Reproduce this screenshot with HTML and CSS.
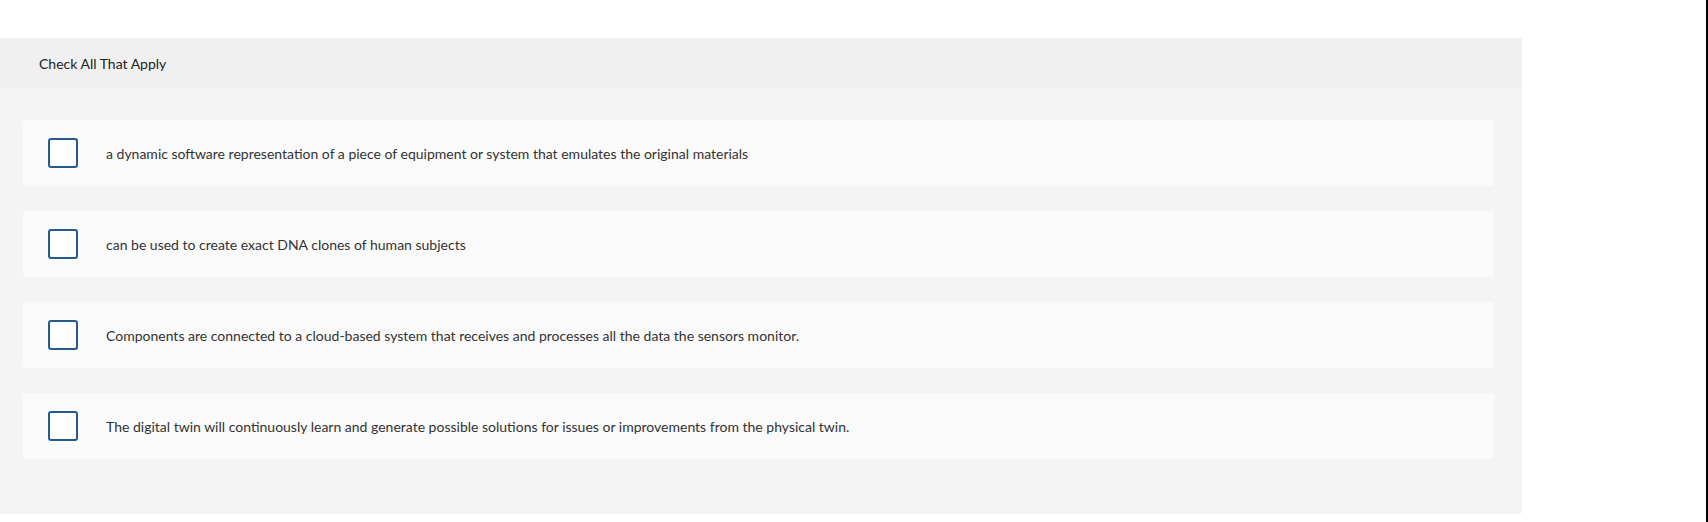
FILE: index.html
```html
<!DOCTYPE html>
<html lang="en">
<head>
<meta charset="utf-8">
<title>Check All That Apply</title>
<link rel="stylesheet" href="styles.css">
</head>
<body>
<div class="panel">
  <div class="panel-header">Check All That Apply</div>
  <div class="panel-body">
    <label class="option">
      <span class="box"></span>
      <span class="text">a dynamic software representation of a piece of equipment or system that emulates the original materials</span>
    </label>
    <label class="option">
      <span class="box"></span>
      <span class="text">can be used to create exact DNA clones of human subjects</span>
    </label>
    <label class="option">
      <span class="box"></span>
      <span class="text">Components are connected to a cloud-based system that receives and processes all the data the sensors monitor.</span>
    </label>
    <label class="option">
      <span class="box"></span>
      <span class="text">The digital twin will continuously learn and generate possible solutions for issues or improvements from the physical twin.</span>
    </label>
  </div>
</div>
</body>
</html>
```

FILE: styles.css
```css
html {
  background: #ffffff;
  border-right: 2px solid #000000;
  height: 100%;
  box-sizing: border-box;
}
body {
  margin: 0;
  padding-top: 38px;
  font-family: "Lato", "Open Sans", "Liberation Sans", sans-serif;
  color: #2b2b2b;
}
.panel {
  width: 1522px;
  background: #f4f4f4;
  border-radius: 0 0 3px 0;
}
.panel-header {
  height: 50px;
  box-sizing: border-box;
  background: #f0f0f0;
  padding-left: 39px;
  display: flex;
  align-items: center;
  font-size: 14px;
  color: #222222;
}
.panel-body {
  padding: 32px 28px 55px 23px;
  display: flex;
  flex-direction: column;
  gap: 25px;
}
.option {
  height: 66px;
  box-sizing: border-box;
  background: #fafafa;
  border-radius: 3px;
  display: flex;
  align-items: center;
  padding-left: 25px;
}
.box {
  width: 30px;
  height: 30px;
  box-sizing: border-box;
  border: 2px solid #245b8f;
  border-radius: 3px;
  background: #ffffff;
  flex: none;
}
.text {
  margin-left: 28px;
  font-size: 14px;
  color: #333333;
}
```
